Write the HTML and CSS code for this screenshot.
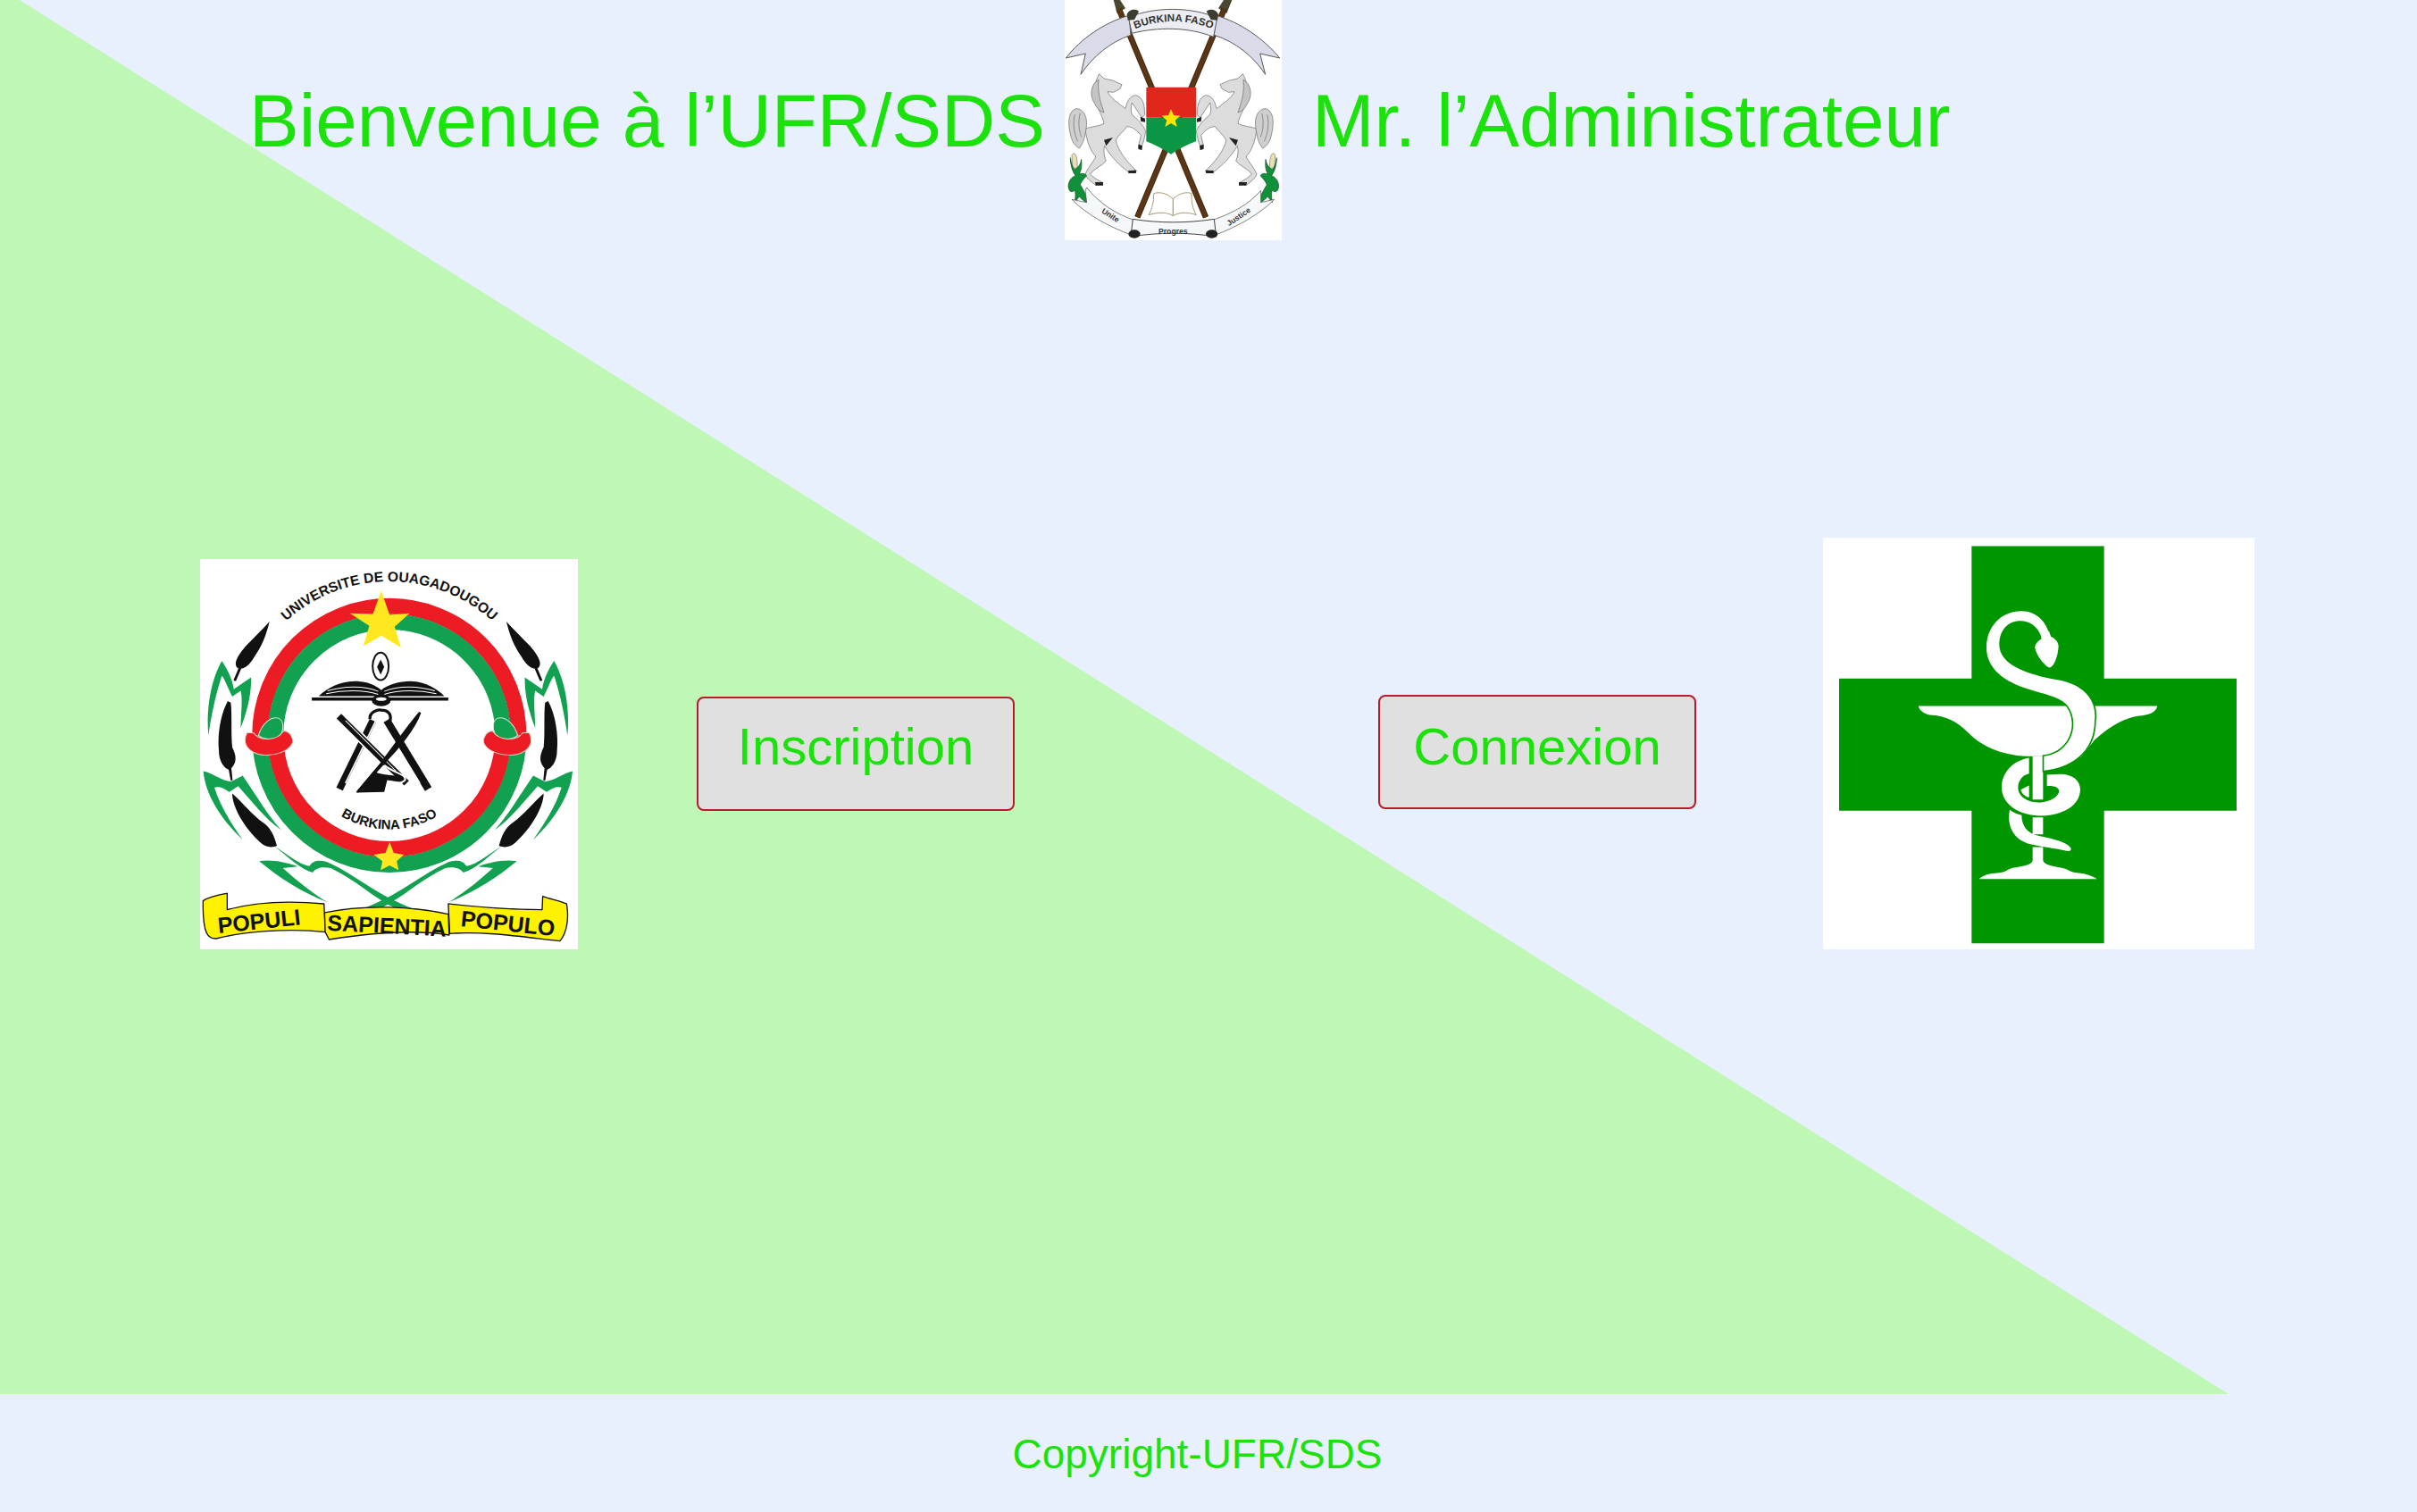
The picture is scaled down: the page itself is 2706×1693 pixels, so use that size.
FILE: index.html
```html
<!DOCTYPE html>
<html>
  <head>
    <meta name="viewport" content="width=device-width,initial-scale=1.0" />
    <title>UFR/SDS</title>
    <link rel="stylesheet" href="styles.css">
  </head>

  <body>
    <section class="hero">
      <header class="top">
        <h1 class="title">Bienvenue à l’UFR/SDS</h1>
        <svg class="emblem" viewBox="36 0 729 807">
          <rect x="36" y="0" width="729" height="807" fill="#fff"/>
          <!-- spears -->
          <path d="M200 0 L212 45 L240 28 L222 0Z M598 0 L580 45 L552 28 L570 0Z" fill="#4a4630"/>
          <path d="M218 30 L510 730" stroke="#3a2a14" stroke-width="20"/>
          <path d="M218 30 L510 730" stroke="#5e3514" stroke-width="14"/>
          <path d="M572 30 L280 730" stroke="#3a2a14" stroke-width="20"/>
          <path d="M572 30 L280 730" stroke="#5e3514" stroke-width="14"/>
          <!-- banner -->
          <g fill="#d9dce8" stroke="#5a5a5a" stroke-width="3" stroke-linejoin="round">
            <path d="M252 52 C170 75 90 130 40 195 L106 180 L90 250 C130 190 190 140 258 118Z"/>
            <path d="M545 52 C625 75 705 130 758 195 L692 180 L710 250 C670 190 610 140 538 118Z"/>
            <path d="M250 58 C340 22 460 22 548 60 L536 124 C450 90 350 90 262 112Z" fill="#eceef4"/>
          </g>
          <path d="M245 48 C252 30 275 28 285 38 L270 66 L248 68Z M552 48 C545 30 522 28 512 38 L527 66 L549 68Z" fill="#3c3c30"/>
          <path id="emblemArc" d="M260 102 C350 62 450 62 544 102" fill="none"/>
          <text class="emblem-name"><textPath href="#emblemArc" startOffset="50%" text-anchor="middle">BURKINA FASO</textPath></text>
          <!-- horses -->
          <g id="horse" fill="#dcdcdc" stroke="#666" stroke-width="2" stroke-linejoin="round">
            <path d="M152 248 L168 264 L196 270 L228 284 L222 298 L200 310 L180 308 C190 330 215 345 240 365 C245 340 255 322 275 320 C295 325 305 345 305 385 L295 395 C285 380 275 365 262 345 C258 360 258 375 262 385 C280 400 300 420 308 440 C305 460 300 480 295 490 L285 485 L292 455 C280 440 265 425 245 425 C235 440 215 455 208 470 C210 500 250 550 275 572 L250 578 C220 555 190 525 170 490 C165 510 170 530 175 540 C165 555 130 570 122 585 C135 600 150 605 165 615 L140 622 C125 610 110 600 105 585 C115 560 140 535 140 525 C125 510 110 480 105 432 C125 425 150 425 168 415 C165 395 150 370 140 345 C135 310 135 275 152 248Z"/>
            <path d="M150 268 C125 280 118 320 135 345 C145 365 155 375 168 378 C160 350 145 320 150 268Z" fill="#c4c4c4"/>
            <path d="M108 432 C115 395 100 365 75 365 C50 370 45 410 55 450 C60 475 70 490 85 498 C100 480 105 455 108 432Z" fill="#cfcfcf"/>
            <path d="M70 385 C62 415 68 450 80 475 M88 380 C80 410 84 440 92 460" fill="none"/>
          </g>
          <path d="M250 573 L278 572 L275 582 L250 582Z M138 612 L165 612 L165 623 L140 623Z M283 485 L297 490 L295 505 L283 500Z M290 392 L306 398 L306 410 L292 408Z M168 470 L198 462 L175 490Z" fill="#222"/>
          <use href="#horse" transform="translate(786 0) scale(-1 1)"/>
          <path d="M536 573 L508 572 L511 582 L536 582Z M648 612 L621 612 L621 623 L646 623Z M503 485 L489 490 L491 505 L503 500Z M496 392 L480 398 L480 410 L494 408Z M618 470 L588 462 L611 490Z" fill="#222"/>
          <!-- shield -->
          <path d="M310 293 H477 V395 H310Z" fill="#e1261c"/>
          <path d="M310 395 H477 V475 Q435 490 393 518 Q350 490 310 475Z" fill="#0a9645"/>
          <polygon points="393,367 402,387 424,389 407,404 413,426 393,414 373,426 379,404 362,389 384,387" fill="#ffe600"/>
          <!-- corn -->
          <g id="corn">
            <path d="M60 520 C72 505 80 530 78 565 L62 565Z" fill="#e8e2b0" stroke="#777" stroke-width="2"/>
            <path d="M55 530 C58 550 62 560 70 570 C85 560 90 548 92 535 C94 560 92 570 85 585 C100 580 105 585 110 590 C100 600 92 610 88 620 C100 640 110 660 122 685 C105 680 95 672 85 660 L70 680 C72 660 74 650 70 640 C55 650 50 640 48 625 C50 605 60 595 72 590 C62 575 55 555 55 530Z" fill="#11903a" stroke="#0a4a20" stroke-width="2"/>
          </g>
          <use href="#corn" transform="translate(803 0) scale(-1 1)"/>
          <!-- lower ribbons -->
          <g fill="#f5f8f8" stroke="#444" stroke-width="3" stroke-linejoin="round">
            <path d="M60 670 C110 720 180 760 262 790 L265 738 C200 715 150 680 110 630 L105 640 L110 680Z" stroke-width="2"/>
            <path d="M740 670 C690 720 620 760 540 790 L537 738 C600 715 650 690 695 640 L695 680Z" stroke-width="2"/>
            <path d="M265 736 C350 750 450 750 538 736 L545 795 C450 780 350 780 258 795Z"/>
          </g>
          <ellipse cx="270" cy="786" rx="20" ry="14" fill="#222"/>
          <ellipse cx="530" cy="786" rx="20" ry="14" fill="#222"/>
          <text class="emblem-motto" x="400" y="787" text-anchor="middle">Progres</text>
          <text class="emblem-motto" transform="translate(158 713) rotate(33)">Unite</text>
          <text class="emblem-motto" transform="translate(588 760) rotate(-34)">Justice</text>
          <!-- book -->
          <g fill="#fff" stroke="#a89a70" stroke-width="3">
            <path d="M400 668 C375 645 350 645 335 650 C335 680 330 700 318 722 C350 712 380 712 400 725Z"/>
            <path d="M400 668 C425 645 450 645 462 650 C462 680 465 700 478 722 C450 712 420 712 400 725Z"/>
          </g>
        </svg>
        <h1 class="title">Mr. l’Administrateur</h1>
      </header>

      <div class="row">
        <svg class="logo-uo" viewBox="42 48 1268 1310">
          <rect x="42" y="48" width="1268" height="1310" fill="#fff"/>
          <path id="uoTop" d="M160 640 A517 517 0 0 1 1194 640" fill="none"/>
          <text class="uo-top"><textPath href="#uoTop" startOffset="50%" text-anchor="middle">UNIVERSITE DE OUAGADOUGOU</textPath></text>
          <!-- ring -->
          <g fill="none" stroke-width="53">
            <path d="M243 640 A434 434 0 0 1 1111 640" stroke="#ed1c24"/>
            <path d="M295 640 A382 382 0 0 1 1059 640" stroke="#12a150"/>
            <path d="M243 640 A434 434 0 0 0 1111 640" stroke="#12a150"/>
            <path d="M295 640 A382 382 0 0 0 1059 640" stroke="#ed1c24"/>
          </g>
          <path id="uoBottom" d="M362 640 A315 315 0 0 0 992 640" fill="none"/>
          <text class="uo-bottom"><textPath href="#uoBottom" startOffset="50%" text-anchor="middle">BURKINA FASO</textPath></text>
          <polygon points="650,155 678,235 745,230 695,275 716,345 650,305 590,340 610,272 545,230 622,232" fill="#ffe81f"/>
          <polygon points="678,998 692,1034 726,1040 702,1062 708,1092 678,1076 648,1092 654,1062 625,1040 664,1034" fill="#ffe81f"/>
          <!-- knots -->
          <g id="knot">
            <path d="M238 640 C250 600 280 575 305 582 C325 590 325 625 305 648 C285 655 255 655 238 640Z" fill="#12a150" stroke="#d8e8d8" stroke-width="3"/>
            <path d="M200 630 L222 632 C240 660 300 660 322 625 C345 625 355 650 352 665 C340 695 290 710 250 705 C215 700 195 680 193 660 C193 645 195 638 200 630Z" fill="#ed1c24" stroke="#e6d8c8" stroke-width="3"/>
          </g>
          <use href="#knot" transform="translate(1346 0) scale(-1 1)"/>
          <!-- torch, book and compass -->
          <ellipse cx="648" cy="408" rx="27" ry="46" fill="#fff" stroke="#111" stroke-width="6"/>
          <path d="M648 385 L660 410 L648 436 L636 410Z" fill="#111"/>
          <path d="M440 508 C470 480 510 460 560 458 C600 458 630 470 650 488 C670 470 710 458 750 458 C800 460 840 485 862 508Z" fill="#111"/>
          <path d="M470 490 C520 475 590 470 640 492 M465 500 C520 488 590 486 640 502 M830 490 C780 475 710 470 660 492 M835 500 C780 488 710 486 660 502" fill="none" stroke="#fff" stroke-width="3"/>
          <path d="M417 518 H875" stroke="#111" stroke-width="10"/>
          <ellipse cx="650" cy="522" rx="32" ry="20" fill="#111"/>
          <ellipse cx="650" cy="518" rx="18" ry="6" fill="#fff"/>
          <path d="M612 585 C610 560 640 552 650 555 C670 555 685 565 680 590" fill="none" stroke="#111" stroke-width="10"/>
          <path d="M622 590 L510 820" stroke="#111" stroke-width="24"/>
          <path d="M632 590 L530 800" stroke="#fff" stroke-width="5"/>
          <path d="M668 590 L808 820" stroke="#111" stroke-width="26"/>
          <path d="M655 595 L780 800" stroke="#fff" stroke-width="4"/>
          <path d="M508 575 L735 800" stroke="#fff" stroke-width="32"/>
          <path d="M508 575 L735 800" stroke="#111" stroke-width="22"/>
          <path d="M530 590 L700 760" stroke="#fff" stroke-width="3"/>
          <path d="M780 563 C760 620 700 690 660 730 L570 830 L650 735 C690 680 740 610 780 563Z" fill="#111" stroke="#111" stroke-width="8"/>
          <path d="M565 832 L625 760 C640 770 680 775 715 775 L735 800 L670 790 L660 830Z" fill="#111"/>
          <path d="M660 740 C700 770 735 770 730 790 C715 805 695 800 680 795" fill="none" stroke="#fff" stroke-width="6"/>
          <!-- wreath -->
          <g id="wreath">
            <path d="M275 258 C265 300 250 340 225 375 C205 410 185 420 170 415 C150 400 170 370 195 340 C225 310 250 285 275 258Z M172 412 L180 416 L162 458 L154 455Z" fill="#111"/>
            <path d="M70 640 C62 560 75 460 115 390 C135 420 150 450 155 485 L213 445 C215 500 200 560 178 615 C180 560 185 510 178 490 L150 510 C130 470 125 450 115 440 C95 500 80 570 70 640Z" fill="#12a150"/>
            <path d="M135 525 C110 570 100 640 105 690 C105 730 125 750 138 755 L145 792 L151 790 L147 750 C165 730 165 710 150 680 C145 630 150 570 145 530Z" fill="#111"/>
            <path d="M53 760 C80 765 110 790 145 795 L185 775 C230 840 270 910 315 958 C260 920 215 860 170 810 L140 830 C120 815 105 810 90 815 C110 880 150 940 185 990 C130 940 60 850 53 760Z" fill="#12a150"/>
            <path d="M150 835 C150 880 190 950 245 1000 C265 1020 290 1015 300 1010 C290 975 280 950 250 930 C220 910 180 860 150 835Z" fill="#111"/>
            <path d="M290 1010 C350 1050 380 1075 410 1078 C420 1058 450 1055 480 1070 C560 1105 650 1190 790 1232 L720 1230 C640 1200 560 1120 480 1085 C450 1080 430 1085 420 1100 C380 1090 340 1050 290 1010Z" fill="#12a150"/>
            <path d="M240 1062 C280 1055 330 1065 370 1080 L320 1085 C370 1130 420 1170 470 1200 C390 1170 310 1120 240 1062Z" fill="#12a150"/>
          </g>
          <use href="#wreath" transform="translate(1345 0) scale(-1 1)"/>
          <!-- motto ribbons -->
          <g fill="#fff200" stroke="#111" stroke-width="4" stroke-linejoin="round">
            <path d="M52 1195 C75 1180 105 1175 133 1170 L133 1225 C240 1195 350 1195 458 1205 L462 1300 C340 1285 180 1300 95 1322 C70 1322 50 1310 52 1195Z"/>
            <path d="M875 1205 C970 1215 1080 1225 1190 1225 L1192 1180 C1220 1190 1250 1195 1272 1205 C1280 1250 1275 1300 1250 1330 C1150 1320 1000 1295 880 1305Z"/>
            <path d="M460 1235 C600 1205 760 1215 875 1240 L878 1310 C760 1290 600 1305 475 1325 L462 1300Z"/>
          </g>
          <text class="uo-motto" transform="translate(104 1304) rotate(-6)">POPULI</text>
          <text class="uo-motto" transform="translate(468 1294) rotate(3)">SAPIENTIA</text>
          <text class="uo-motto" transform="translate(915 1280) rotate(6)">POPULO</text>
        </svg>

        <button class="btn btn-inscription">Inscription</button>
        <button class="btn btn-connexion">Connexion</button>

        <svg class="logo-cross" viewBox="33 36 1449 1382">
          <rect x="33" y="36" width="1449" height="1382" fill="#fff"/>
          <path d="M532 64 H977 V509 H1422 V953 H977 V1398 H532 V953 H87 V509 H532Z" fill="#009600"/>
          <g fill="#fff">
            <path d="M353 601 H1156 C1150 625 1125 632 1095 634 C1050 640 1000 665 945 715 L900 772 H772 V770 H737 C640 770 570 740 520 690 C480 650 440 635 400 632 C375 630 358 618 353 601Z"/>
            <path d="M737 770 H772 V915 H737Z M737 975 H772 V1032 H737Z"/>
            <path d="M737 1075 H772 V1120 C775 1135 810 1140 835 1145 C860 1150 860 1160 890 1162 C910 1163 935 1170 953 1182 H557 C570 1170 590 1163 620 1162 C650 1160 650 1150 670 1145 C700 1140 735 1135 737 1120Z"/>
          </g>
          <!-- serpent, green edge first so it cuts the bowl -->
          <path id="snake" d="M795 365 C780 310 745 282 700 282 C630 282 582 335 582 405 C582 470 635 515 710 540 C770 560 825 570 850 595 C880 630 880 680 860 715 C840 750 810 765 775 770 L775 818 C860 810 945 760 945 650 C955 580 905 530 830 515 C740 500 625 470 625 395 C625 345 655 315 695 315 C730 315 755 335 767 370Z" fill="#fff" stroke="#009600" stroke-width="10" paint-order="stroke"/>
          <polygon points="764,355 792,350 800,372 768,385" fill="#fff"/>
          <path d="M790 366 C805 368 822 380 824 400 C822 430 812 465 795 472 C780 472 745 425 745 402 C747 385 770 370 790 366Z" fill="#fff"/>
          <path d="M725 775 C670 785 633 825 633 875 C633 930 690 970 765 970 C840 968 897 935 897 880 C895 850 870 830 830 830 L785 832 L785 870 C810 868 828 875 826 890 C820 910 790 925 755 925 C720 925 688 905 688 875 C688 850 705 832 725 828Z" fill="#fff"/>
          <path d="M725 868 L697 882 C700 895 712 905 725 908Z" fill="#fff"/>
          <path d="M660 950 C650 1000 670 1050 730 1065 C770 1075 820 1080 850 1088 C862 1090 868 1085 865 1078 C850 1055 790 1045 750 1035 C720 1028 700 1005 700 968 C685 965 672 958 660 950Z" fill="#fff"/>
        </svg>
      </div>
    </section>

    <footer class="footer">Copyright-UFR/SDS</footer>
  </body>
</html>
```

FILE: styles.css
```css
body {
  margin: 0;
  background: #e8f0fe;
  color: #1be20a;
  font-family: "Liberation Sans", Arial, sans-serif;
}

.hero {
  position: relative;
  height: 1561px;
  overflow: hidden;
}

.hero::before {
  content: "";
  position: absolute;
  inset: 0;
  background: #bff7b4;
  clip-path: polygon(0 0, 22px 0, 2495px 100%, 0 100%);
}

.top,
.row {
  position: relative;
  display: flex;
}

.top {
  align-items: center;
  height: 269px;
  padding-left: 279px;
}

.title {
  margin: 2px 0 0;
  font-size: 83.5px;
  font-weight: normal;
  white-space: nowrap;
}

.emblem {
  width: 243px;
  height: 269px;
  margin: 0 34px 0 22px;
}

.row {
  align-items: flex-end;
  margin-top: 333px;
  padding-left: 224px;
}

.logo-uo {
  width: 423px;
  height: 437px;
}

.logo-cross {
  width: 483px;
  height: 461px;
  margin-left: 142px;
}

.btn {
  box-sizing: border-box;
  width: 356px;
  height: 128px;
  background: #e0e0e0;
  border: 2px solid #b71c2c;
  border-radius: 8px;
  color: #1be20a;
  font-family: inherit;
  font-size: 58px;
}

.btn-inscription {
  margin: 0 0 155px 133px;
  padding: 0 0 17px;
}

.btn-connexion {
  margin: 0 0 157px 407px;
  padding: 0 0 13px;
}

.footer {
  height: 132px;
  padding-top: 39px;
  box-sizing: border-box;
  text-align: center;
  font-size: 46px;
  line-height: 56px;
  padding-right: 25px;
}

.emblem-name {
  font-size: 35px;
  font-weight: bold;
  fill: #333;
}

.emblem-motto {
  font-size: 26px;
  font-weight: bold;
  fill: #333;
}

.uo-top {
  font-size: 47px;
  font-weight: bold;
  fill: #111;
}

.uo-bottom {
  font-size: 45px;
  font-weight: bold;
  fill: #111;
}

.uo-motto {
  font-size: 75px;
  font-weight: bold;
  fill: #111;
}
```
